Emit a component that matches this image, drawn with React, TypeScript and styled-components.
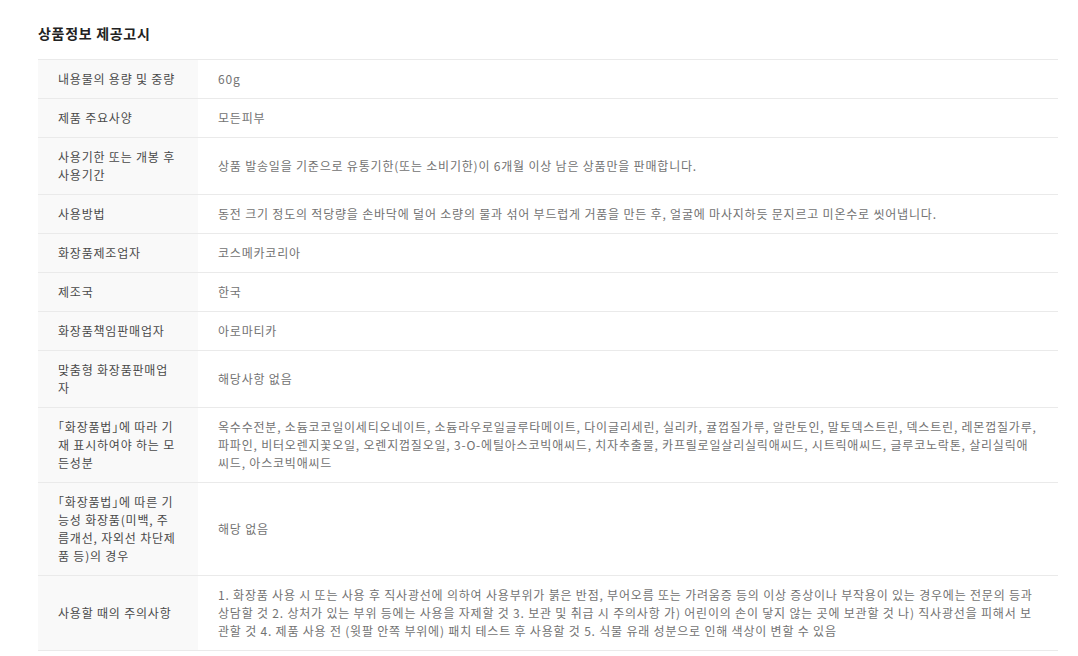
import React from "react";
import styled, { createGlobalStyle } from "styled-components";

const GlobalStyle = createGlobalStyle`
  html, body {
    margin: 0;
    padding: 0;
    background: #ffffff;
  }
  body {
    font-family: "Noto Sans CJK KR", "Noto Sans", "Liberation Sans", sans-serif;
  }
`;

const Wrapper = styled.section`
  width: 1020px;
  padding: 23px 20px 0 38px;
`;

const Title = styled.h2`
  margin: 0 0 16px;
  font-size: 14px;
  line-height: 20px;
  font-weight: 700;
  color: #222222;
  letter-spacing: 0.7px;
`;

const Table = styled.table`
  width: 100%;
  border-collapse: collapse;
  table-layout: fixed;
  border-top: 1px solid #eaeaea;
`;

const Row = styled.tr`
  border-bottom: 1px solid #eaeaea;
`;

const Label = styled.th`
  width: 160px;
  box-sizing: border-box;
  padding: 10px 20px;
  background: #f9f9f9;
  text-align: left;
  vertical-align: middle;
  font-size: 12px;
  line-height: 18px;
  font-weight: 400;
  letter-spacing: 0.8px;
  color: #4a4a4a;
  word-break: break-all;
  font-feature-settings: "halt";
`;

const Value = styled.td`
  padding: 10px 20px;
  vertical-align: middle;
  font-size: 12px;
  line-height: 18px;
  letter-spacing: 0.8px;
  color: #727272;
  word-break: break-all;
`;

const rows: [string, string][] = [
  ["내용물의 용량 및 중량", "60g"],
  ["제품 주요사양", "모든피부"],
  ["사용기한 또는 개봉 후 사용기간", "상품 발송일을 기준으로 유통기한(또는 소비기한)이 6개월 이상 남은 상품만을 판매합니다."],
  ["사용방법", "동전 크기 정도의 적당량을 손바닥에 덜어 소량의 물과 섞어 부드럽게 거품을 만든 후, 얼굴에 마사지하듯 문지르고 미온수로 씻어냅니다."],
  ["화장품제조업자", "코스메카코리아"],
  ["제조국", "한국"],
  ["화장품책임판매업자", "아로마티카"],
  ["맞춤형 화장품판매업자", "해당사항 없음"],
  [
    "「화장품법」에 따라 기재 표시하여야 하는 모든성분",
    "옥수수전분, 소듐코코일이세티오네이트, 소듐라우로일글루타메이트, 다이글리세린, 실리카, 귤껍질가루, 알란토인, 말토덱스트린, 덱스트린, 레몬껍질가루, 파파인, 비터오렌지꽃오일, 오렌지껍질오일, 3-O-에틸아스코빅애씨드, 치자추출물, 카프릴로일살리실릭애씨드, 시트릭애씨드, 글루코노락톤, 살리실릭애씨드, 아스코빅애씨드",
  ],
  ["「화장품법」에 따른 기능성 화장품(미백, 주름개선, 자외선 차단제품 등)의 경우", "해당 없음"],
  [
    "사용할 때의 주의사항",
    "1. 화장품 사용 시 또는 사용 후 직사광선에 의하여 사용부위가 붉은 반점, 부어오름 또는 가려움증 등의 이상 증상이나 부작용이 있는 경우에는 전문의 등과 상담할 것 2. 상처가 있는 부위 등에는 사용을 자제할 것 3. 보관 및 취급 시 주의사항 가) 어린이의 손이 닿지 않는 곳에 보관할 것 나) 직사광선을 피해서 보관할 것 4. 제품 사용 전 (윗팔 안쪽 부위에) 패치 테스트 후 사용할 것 5. 식물 유래 성분으로 인해 색상이 변할 수 있음",
  ],
];

export default function App() {
  return (
    <>
      <GlobalStyle />
      <Wrapper>
        <Title>상품정보 제공고시</Title>
        <Table>
          <tbody>
            {rows.map(([label, value]) => (
              <Row key={label}>
                <Label scope="row">{label}</Label>
                <Value>{value}</Value>
              </Row>
            ))}
          </tbody>
        </Table>
      </Wrapper>
    </>
  );
}
